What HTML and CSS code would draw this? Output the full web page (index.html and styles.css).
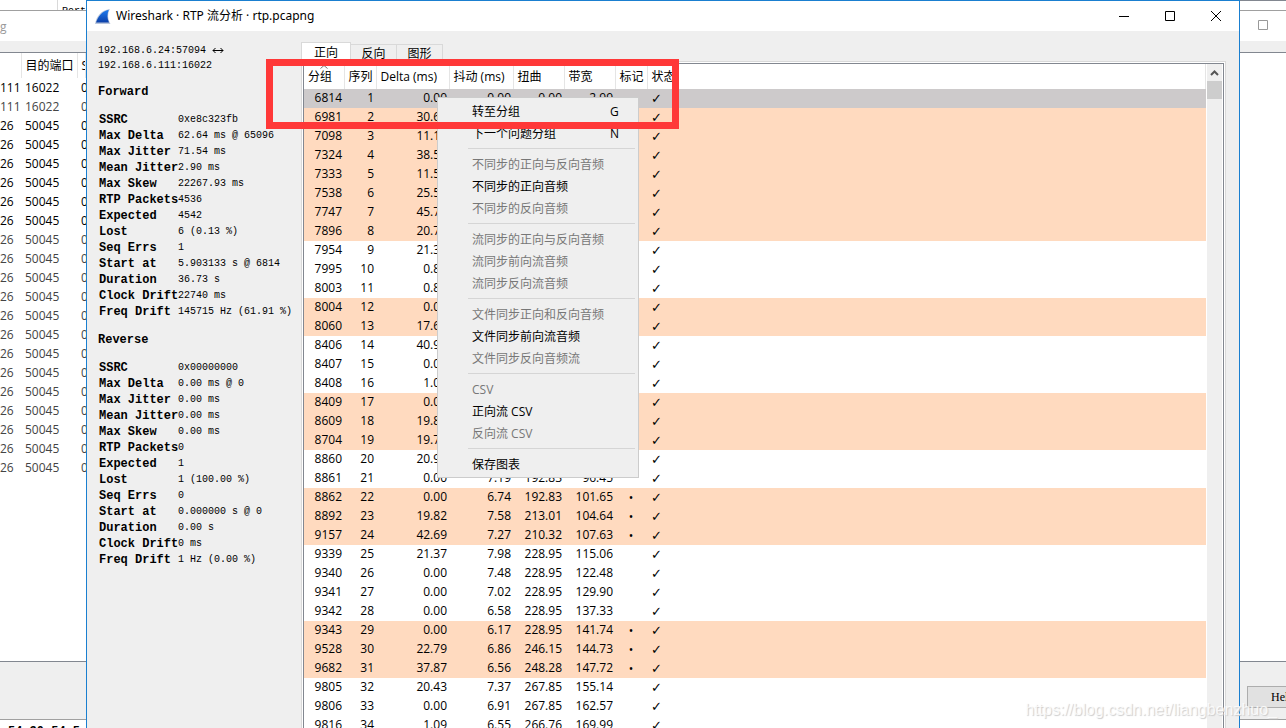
FILE: index.html
```html
<!DOCTYPE html>
<html lang="zh-CN">
<head>
<meta charset="utf-8">
<title>Wireshark · RTP 流分析 · rtp.pcapng</title>
<link rel="stylesheet" href="styles.css">
</head>
<body>
<div class="desktop">
  <section class="back back-left">
    <div class="back-top"><span class="back-cell"></span><span class="back-cut">Port</span></div>
    <div class="back-title">g</div>
    <div class="back-strip"></div>
    <div class="back-list">
      <table class="ports">
        <thead><tr><th class="p-addr"></th><th class="p-port">目的端口</th><th>SSRC</th></tr></thead>
        <tbody>
          <tr><td>111</td><td>16022</td><td>0x</td></tr>
          <tr class="dim"><td>111</td><td>16022</td><td>0x</td></tr>
          <tr><td>26</td><td>50045</td><td>0x</td></tr>
          <tr><td>26</td><td>50045</td><td>0x</td></tr>
          <tr><td>26</td><td>50045</td><td>0x</td></tr>
          <tr><td>26</td><td>50045</td><td>0x</td></tr>
          <tr><td>26</td><td>50045</td><td>0x</td></tr>
          <tr><td>26</td><td>50045</td><td>0x</td></tr>
          <tr class="dim"><td>26</td><td>50045</td><td>0x</td></tr>
          <tr class="dim"><td>26</td><td>50045</td><td>0x</td></tr>
          <tr class="dim"><td>26</td><td>50045</td><td>0x</td></tr>
          <tr class="dim"><td>26</td><td>50045</td><td>0x</td></tr>
          <tr class="dim"><td>26</td><td>50045</td><td>0x</td></tr>
          <tr class="dim"><td>26</td><td>50045</td><td>0x</td></tr>
          <tr class="dim"><td>26</td><td>50045</td><td>0x</td></tr>
          <tr class="dim"><td>26</td><td>50045</td><td>0x</td></tr>
          <tr class="dim"><td>26</td><td>50045</td><td>0x</td></tr>
          <tr class="dim"><td>26</td><td>50045</td><td>0x</td></tr>
          <tr class="dim"><td>26</td><td>50045</td><td>0x</td></tr>
          <tr class="dim"><td>26</td><td>50045</td><td>0x</td></tr>
          <tr class="dim"><td>26</td><td>50045</td><td>0x</td></tr>
        </tbody>
      </table>
    </div>
    <div class="back-foot"></div>
    <div class="back-hex">54 30 54 5</div>
  </section>

  <main class="window">
    <header class="titlebar">
      <svg class="fin" viewBox="0 0 16 15"><defs><linearGradient id="sea" x1="0" y1="0" x2="0" y2="1"><stop offset="0" stop-color="#1f7df0"/><stop offset="1" stop-color="#0b3fa8"/></linearGradient></defs><path d="M0 15C1 8 6 1 15 0C12.500 4 12.500 10 15.500 15Z" fill="#b9c6dc"/><path d="M1 13.500C3 8 7 2 13.800 .8C12 5 12 9.500 14 13.500Z" fill="url(#sea)"/></svg>
      <h1>Wireshark · RTP 流分析 · rtp.pcapng</h1>
      <button class="caption" aria-label="最小化"><svg viewBox="0 0 10 10"><path d="M0 5.500H10"/></svg></button>
      <button class="caption" aria-label="最大化"><svg viewBox="0 0 10 10"><path d="M.5 .5H9.500V9.500H.5Z"/></svg></button>
      <button class="caption" aria-label="关闭"><svg viewBox="0 0 10 10"><path d="M0 0L10 10M10 0L0 10"/></svg></button>
    </header>

    <div class="content">
      <aside class="stats">
        <p class="route">192.168.6.24:57094 <svg class="arrow" viewBox="0 0 12 7"><path d="M1 3.500H11M3.500 1L1 3.500L3.500 6M8.500 1L11 3.500L8.500 6"/></svg><br>192.168.6.111:16022</p>
        <h2>Forward</h2>
        <dl>
          <dt>SSRC</dt><dd>0xe8c323fb</dd>
          <dt>Max Delta</dt><dd>62.64 ms @ 65096</dd>
          <dt>Max Jitter</dt><dd>71.54 ms</dd>
          <dt>Mean Jitter</dt><dd>2.90 ms</dd>
          <dt>Max Skew</dt><dd>22267.93 ms</dd>
          <dt>RTP Packets</dt><dd>4536</dd>
          <dt>Expected</dt><dd>4542</dd>
          <dt>Lost</dt><dd>6 (0.13 %)</dd>
          <dt>Seq Errs</dt><dd>1</dd>
          <dt>Start at</dt><dd>5.903133 s @ 6814</dd>
          <dt>Duration</dt><dd>36.73 s</dd>
          <dt>Clock Drift</dt><dd>22740 ms</dd>
          <dt>Freq Drift</dt><dd>145715 Hz (61.91 %)</dd>
        </dl>
        <h2>Reverse</h2>
        <dl>
          <dt>SSRC</dt><dd>0x00000000</dd>
          <dt>Max Delta</dt><dd>0.00 ms @ 0</dd>
          <dt>Max Jitter</dt><dd>0.00 ms</dd>
          <dt>Mean Jitter</dt><dd>0.00 ms</dd>
          <dt>Max Skew</dt><dd>0.00 ms</dd>
          <dt>RTP Packets</dt><dd>0</dd>
          <dt>Expected</dt><dd>1</dd>
          <dt>Lost</dt><dd>1 (100.00 %)</dd>
          <dt>Seq Errs</dt><dd>0</dd>
          <dt>Start at</dt><dd>0.000000 s @ 0</dd>
          <dt>Duration</dt><dd>0.00 s</dd>
          <dt>Clock Drift</dt><dd>0 ms</dd>
          <dt>Freq Drift</dt><dd>1 Hz (0.00 %)</dd>
        </dl>
      </aside>

      <section class="panel">
        <div class="tabs" role="tablist">
          <button class="tab active" role="tab" aria-selected="true">正向</button>
          <button class="tab" role="tab">反向</button>
          <button class="tab" role="tab">图形</button>
        </div>
        <div class="pane">
          <div class="frame">
            <div class="rows">
              <table class="packets">
                <colgroup><col class="w-packet"><col class="w-narrow"><col class="w-delta"><col class="w-jitter"><col class="w-value"><col class="w-value"><col class="w-narrow"><col></colgroup>
                <thead><tr><th><svg class="sort" viewBox="0 0 8 4"><path d="M.5 3.500L4 .5L7.500 3.500"/></svg>分组</th><th>序列</th><th>Delta (ms)</th><th>抖动 (ms)</th><th>扭曲</th><th>带宽</th><th>标记</th><th>状态</th></tr></thead>
                <tbody>
                  <tr class="selected"><td>6814</td><td>1</td><td>0.00</td><td>0.00</td><td>0.00</td><td>2.99</td><td></td><td>✓</td></tr>
                  <tr class="marked"><td>6981</td><td>2</td><td>30.60</td><td></td><td></td><td></td><td></td><td>✓</td></tr>
                  <tr class="marked"><td>7098</td><td>3</td><td>11.10</td><td></td><td></td><td></td><td></td><td>✓</td></tr>
                  <tr class="marked"><td>7324</td><td>4</td><td>38.50</td><td></td><td></td><td></td><td></td><td>✓</td></tr>
                  <tr class="marked"><td>7333</td><td>5</td><td>11.50</td><td></td><td></td><td></td><td></td><td>✓</td></tr>
                  <tr class="marked"><td>7538</td><td>6</td><td>25.50</td><td></td><td></td><td></td><td></td><td>✓</td></tr>
                  <tr class="marked"><td>7747</td><td>7</td><td>45.70</td><td></td><td></td><td></td><td></td><td>✓</td></tr>
                  <tr class="marked"><td>7896</td><td>8</td><td>20.70</td><td></td><td></td><td></td><td></td><td>✓</td></tr>
                  <tr><td>7954</td><td>9</td><td>21.30</td><td></td><td></td><td></td><td></td><td>✓</td></tr>
                  <tr><td>7995</td><td>10</td><td>0.80</td><td></td><td></td><td></td><td></td><td>✓</td></tr>
                  <tr><td>8003</td><td>11</td><td>0.80</td><td></td><td></td><td></td><td></td><td>✓</td></tr>
                  <tr class="marked"><td>8004</td><td>12</td><td>0.00</td><td></td><td></td><td></td><td></td><td>✓</td></tr>
                  <tr class="marked"><td>8060</td><td>13</td><td>17.60</td><td></td><td></td><td></td><td></td><td>✓</td></tr>
                  <tr><td>8406</td><td>14</td><td>40.90</td><td></td><td></td><td></td><td></td><td>✓</td></tr>
                  <tr><td>8407</td><td>15</td><td>0.00</td><td></td><td></td><td></td><td></td><td>✓</td></tr>
                  <tr><td>8408</td><td>16</td><td>1.00</td><td></td><td></td><td></td><td></td><td>✓</td></tr>
                  <tr class="marked"><td>8409</td><td>17</td><td>0.00</td><td></td><td></td><td></td><td></td><td>✓</td></tr>
                  <tr class="marked"><td>8609</td><td>18</td><td>19.80</td><td></td><td></td><td></td><td></td><td>✓</td></tr>
                  <tr class="marked"><td>8704</td><td>19</td><td>19.70</td><td></td><td></td><td></td><td></td><td>✓</td></tr>
                  <tr><td>8860</td><td>20</td><td>20.90</td><td></td><td></td><td></td><td></td><td>✓</td></tr>
                  <tr><td>8861</td><td>21</td><td>0.00</td><td>7.19</td><td>192.83</td><td>96.45</td><td></td><td>✓</td></tr>
                  <tr class="marked"><td>8862</td><td>22</td><td>0.00</td><td>6.74</td><td>192.83</td><td>101.65</td><td>•</td><td>✓</td></tr>
                  <tr class="marked"><td>8892</td><td>23</td><td>19.82</td><td>7.58</td><td>213.01</td><td>104.64</td><td>•</td><td>✓</td></tr>
                  <tr class="marked"><td>9157</td><td>24</td><td>42.69</td><td>7.27</td><td>210.32</td><td>107.63</td><td>•</td><td>✓</td></tr>
                  <tr><td>9339</td><td>25</td><td>21.37</td><td>7.98</td><td>228.95</td><td>115.06</td><td></td><td>✓</td></tr>
                  <tr><td>9340</td><td>26</td><td>0.00</td><td>7.48</td><td>228.95</td><td>122.48</td><td></td><td>✓</td></tr>
                  <tr><td>9341</td><td>27</td><td>0.00</td><td>7.02</td><td>228.95</td><td>129.90</td><td></td><td>✓</td></tr>
                  <tr><td>9342</td><td>28</td><td>0.00</td><td>6.58</td><td>228.95</td><td>137.33</td><td></td><td>✓</td></tr>
                  <tr class="marked"><td>9343</td><td>29</td><td>0.00</td><td>6.17</td><td>228.95</td><td>141.74</td><td>•</td><td>✓</td></tr>
                  <tr class="marked"><td>9528</td><td>30</td><td>22.79</td><td>6.86</td><td>246.15</td><td>144.73</td><td>•</td><td>✓</td></tr>
                  <tr class="marked"><td>9682</td><td>31</td><td>37.87</td><td>6.56</td><td>248.28</td><td>147.72</td><td>•</td><td>✓</td></tr>
                  <tr><td>9805</td><td>32</td><td>20.43</td><td>7.37</td><td>267.85</td><td>155.14</td><td></td><td>✓</td></tr>
                  <tr><td>9806</td><td>33</td><td>0.00</td><td>6.91</td><td>267.85</td><td>162.57</td><td></td><td>✓</td></tr>
                  <tr><td>9816</td><td>34</td><td>1.09</td><td>6.55</td><td>266.76</td><td>169.99</td><td></td><td>✓</td></tr>
                </tbody>
              </table>
            </div>
            <div class="scrollbar"><svg class="scroll-up" viewBox="0 0 15 17"><path d="M4 11L7.500 7.500L11 11"/></svg><div class="thumb"></div></div>
          </div>
        </div>
      </section>
    </div>

    <div class="menu" role="menu">
      <button role="menuitem">转至分组<kbd>G</kbd></button>
      <button role="menuitem">下一个问题分组<kbd>N</kbd></button>
      <hr>
      <button role="menuitem" disabled>不同步的正向与反向音频</button>
      <button role="menuitem">不同步的正向音频</button>
      <button role="menuitem" disabled>不同步的反向音频</button>
      <hr>
      <button role="menuitem" disabled>流同步的正向与反向音频</button>
      <button role="menuitem" disabled>流同步前向流音频</button>
      <button role="menuitem" disabled>流同步反向流音频</button>
      <hr>
      <button role="menuitem" disabled>文件同步正向和反向音频</button>
      <button role="menuitem">文件同步前向流音频</button>
      <button role="menuitem" disabled>文件同步反向音频流</button>
      <hr>
      <button role="menuitem" disabled>CSV</button>
      <button role="menuitem">正向流 CSV</button>
      <button role="menuitem" disabled>反向流 CSV</button>
      <hr>
      <button role="menuitem">保存图表</button>
    </div>
    <div class="highlight"></div>
  </main>

  <section class="back back-right">
    <div class="back-top"></div>
    <div class="back-title"><svg class="back-max" viewBox="0 0 10 10"><path d="M.5 .5H9.500V9.500H.5Z"/></svg></div>
    <div class="back-strip"></div>
    <div class="back-list"></div>
    <div class="back-foot"><button class="help">Help</button></div>
    <div class="back-hex"></div>
  </section>

  <div class="watermark">https://blog.csdn.net/liangbenzhuo_</div>
</div>
</body>
</html>
```

FILE: styles.css
```css
* { box-sizing: border-box; }

body {
  margin: 0;
  font: 12px/19px "Open Sans", "Noto Sans CJK SC", sans-serif;
  color: #000;
  background: #fff;
}

button, kbd { font: inherit; color: inherit; }
button { margin: 0; padding: 0; border: 0; background: none; }
table { border-collapse: collapse; table-layout: fixed; }
th, td { padding: 0; font-weight: 400; text-align: left; white-space: nowrap; overflow: hidden; }

.desktop {
  position: relative;
  display: grid;
  grid-template-columns: 86px 1fr 46px;
  height: 100vh;
  overflow: hidden;
}

/* Windows behind the dialog */
.back { display: flex; flex-direction: column; min-width: 0; overflow: hidden; }
.back-top { display: flex; flex: none; height: 11px; border-bottom: 1px solid #a0a0a0; overflow: hidden; }
.back-cell { flex: none; width: 58px; border-right: 1px solid #d9d9d9; }
.back-cut { padding: 4px 4px 0; font: 10px/16px "Liberation Mono", monospace; }
.back-title { flex: none; height: 30px; line-height: 31px; color: #999; }
.back-strip { flex: none; height: 11px; background: #efefef; }
.back-list { flex: 1; min-height: 0; border: solid #828790; border-width: 1px 0; overflow: hidden; }
.back-foot { flex: none; height: 57px; background: #efefef; }
.back-hex { flex: none; height: 9px; padding: 4px 0 0 8px; border-top: 1px solid #a0a0a0; font: 700 12px/16px "Liberation Mono", monospace; white-space: nowrap; overflow: hidden; }
.back-right .back-top { border-top: 1px solid #828790; }
.back-max { display: block; width: 10px; height: 10px; margin: 9px 0 0 18px; fill: none; stroke: #999; }

.ports { width: 100%; }
.ports th { height: 25px; border-right: 1px solid #e5e5e5; }
.ports th, .ports td { padding-left: 4px; }
.ports td:first-child { padding-left: 0; }
.ports td { height: 19px; }
.p-addr { width: 21px; }
.p-port { width: 56px; }
.dim { color: #444; }

.help {
  display: block;
  width: 90px;
  height: 22px;
  margin: 24px 0 0 7px;
  padding-left: 23px;
  border: 1px solid #adadad;
  background: #e1e1e1;
  font: 12px/20px "Liberation Serif", serif;
  text-align: left;
}

/* Dialog */
.window {
  position: relative;
  display: flex;
  flex-direction: column;
  min-width: 0;
  min-height: 0;
  border: solid #1a7fd0;
  border-width: 1px 1px 0;
  background: #efefef;
}
.titlebar { display: flex; flex: none; align-items: center; height: 30px; padding-left: 8px; background: #fff; }
.titlebar h1 { flex: 1; margin: 0 0 0 5px; font: 12px/20px "Noto Sans", "Noto Sans CJK SC", sans-serif; }
.fin { width: 16px; height: 15px; }
.caption { display: grid; place-items: center; width: 46px; height: 30px; }
.caption svg { width: 10px; height: 10px; overflow: visible; fill: none; stroke: #000; }

.content { display: grid; grid-template-columns: 214px 1fr; flex: 1; min-height: 0; padding: 11px 13px 0 0; }

.stats { padding: 1px 0 0 11px; font: 10px/16px "Liberation Mono", monospace; white-space: nowrap; }
.route { margin: 0 0 11px; line-height: 15px; }
.arrow { width: 12px; height: 7px; fill: none; stroke: #000; vertical-align: middle; }
.stats h2 { margin: 0 0 12px; font-size: 12px; line-height: 16px; }
.stats dl { display: grid; grid-template-columns: 79px 1fr; margin: 0 0 12px; padding-left: 1px; }
.stats dt { font-size: 12px; font-weight: 700; }
.stats dd { margin: 0; }

.panel { display: flex; flex-direction: column; min-width: 0; min-height: 0; }
.tabs { display: flex; flex: none; align-items: flex-end; height: 19px; }
.tab { width: 46px; height: 17px; border: solid #d9d9d9; border-width: 1px 1px 0 0; line-height: 18px; overflow: hidden; }
.tab.active { width: 50px; height: 19px; border-left-width: 1px; line-height: 20px; background: #fff; }
.pane { display: flex; flex: 1; min-height: 0; padding: 1px 1px 0; border: solid #d9d9d9; border-width: 1px 1px 0; background: #fff; }
.frame { display: flex; flex: 1; min-width: 0; border: solid #828790; border-width: 1px 1px 0; }
.rows { flex: 1; min-width: 0; overflow: hidden; }
.scrollbar { flex: none; width: 17px; border: solid #fff; border-width: 0 1px; background: #efefef; }
.scroll-up { display: block; width: 15px; height: 17px; fill: none; stroke: #555; stroke-width: 2; }
.thumb { height: 18px; background: #cdcdcd; }

.packets { width: 100%; }
.packets th { position: relative; height: 25px; padding-left: 4px; border-right: 1px solid #e5e5e5; }
.packets td { height: 19px; padding: 0 2px 2px 0; text-align: right; line-height: 17px; }
.packets td:nth-child(7) { padding: 0; text-align: center; line-height: 19px; }
.packets td:nth-child(8) { padding: 0 0 0 4px; text-align: left; font: 13px/19px "DejaVu Sans", sans-serif; }
.w-packet { width: 40px; }
.w-narrow { width: 32px; }
.w-delta { width: 73px; }
.w-jitter { width: 64px; }
.w-value { width: 51px; }
.selected { background: #cdcacb; }
.marked { background: #ffdabf; }
.sort { position: absolute; top: 1px; left: 16px; width: 8px; height: 4px; fill: none; stroke: #777; }

/* Context menu over the packet list */
.menu {
  position: absolute;
  top: 96px;
  left: 350px;
  width: 202px;
  padding: 2px;
  border: 1px solid #ccc;
  background: #efefef;
}
.menu button { display: flex; width: 100%; height: 22px; padding: 0 18px 0 32px; line-height: 24px; text-align: left; }
.menu button:disabled { color: #777; }
.menu kbd { width: 8px; margin-left: auto; }
.menu hr { height: 1px; margin: 4px 1px 4px 28px; border: 0; background: #d5d5d5; }

.highlight { position: absolute; top: 58px; left: 179px; width: 413px; height: 70px; border: 7px solid #ff3838; }

.watermark {
  position: absolute;
  right: 9px;
  bottom: 8px;
  font: 16px/20px "Liberation Sans", sans-serif;
  color: rgba(255, 255, 255, .8);
  text-shadow: 1px 1px 1px #ccc;
}
```
